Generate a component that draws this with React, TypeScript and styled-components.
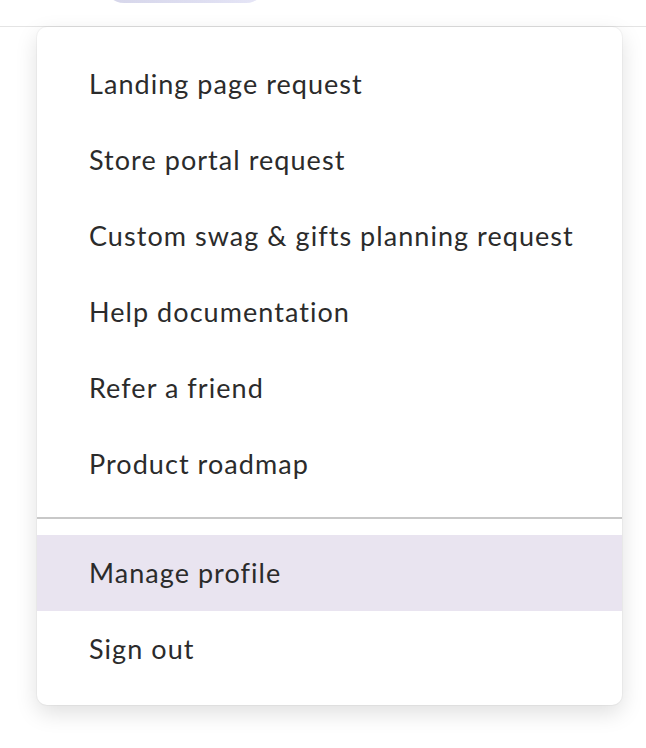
import styled, { createGlobalStyle } from 'styled-components';

const GlobalStyle = createGlobalStyle`
  html, body {
    margin: 0;
    padding: 0;
    background: #fff;
    font-family: 'Lato', 'Liberation Sans', sans-serif;
  }
`;

const items = [
  'Landing page request',
  'Store portal request',
  'Custom swag & gifts planning request',
  'Help documentation',
  'Refer a friend',
  'Product roadmap',
];

const accountItems = [
  { key: 'profile', label: 'Manage profile', active: true },
  { key: 'signout', label: 'Sign out', active: false },
];

const Page = styled.div`
  width: 646px;
  height: 748px;
  overflow: hidden;
  background: #fff;
`;

const Header = styled.div`
  height: 26px;
  display: flex;
  align-items: flex-start;
  padding-left: 104px;
  border-bottom: 1px solid #e4e4e4;
  background: #fff;
  overflow: hidden;
`;

const Pill = styled.div`
  width: 162px;
  height: 40px;
  margin-top: -37px;
  border-radius: 20px;
  background: linear-gradient(90deg, #d6d6ea 0%, #dedef1 60%, #e6e6f7 100%);
`;

const Body = styled.div`
  padding: 0 24px 0 37px;
`;

const MenuCard = styled.div`
  background: #fff;
  border-radius: 10px;
  box-shadow: 0 0 0 1px rgba(0, 0, 0, 0.03), 0 8px 22px rgba(0, 0, 0, 0.13);
  padding: 19px 0 18px;
  display: flex;
  flex-direction: column;
`;

const MenuItem = styled.div<{ $active?: boolean }>`
  height: 76px;
  line-height: 76px;
  padding-left: 52px;
  font-size: 27px;
  color: #2b2b2b;
  letter-spacing: 1.05px;
  white-space: nowrap;
  background: ${(p) => (p.$active ? '#e9e4f0' : 'transparent')};
`;

const Divider = styled.div`
  height: 2px;
  background: #c8c8c8;
  margin: 15px 0 16px;
`;

export default function App() {
  return (
    <Page>
      <GlobalStyle />
      <Header>
        <Pill />
      </Header>
      <Body>
        <MenuCard>
          {items.map((label) => (
            <MenuItem key={label}>{label}</MenuItem>
          ))}
          <Divider />
          {accountItems.map((item) => (
            <MenuItem key={item.key} $active={item.active}>
              {item.label}
            </MenuItem>
          ))}
        </MenuCard>
      </Body>
    </Page>
  );
}
